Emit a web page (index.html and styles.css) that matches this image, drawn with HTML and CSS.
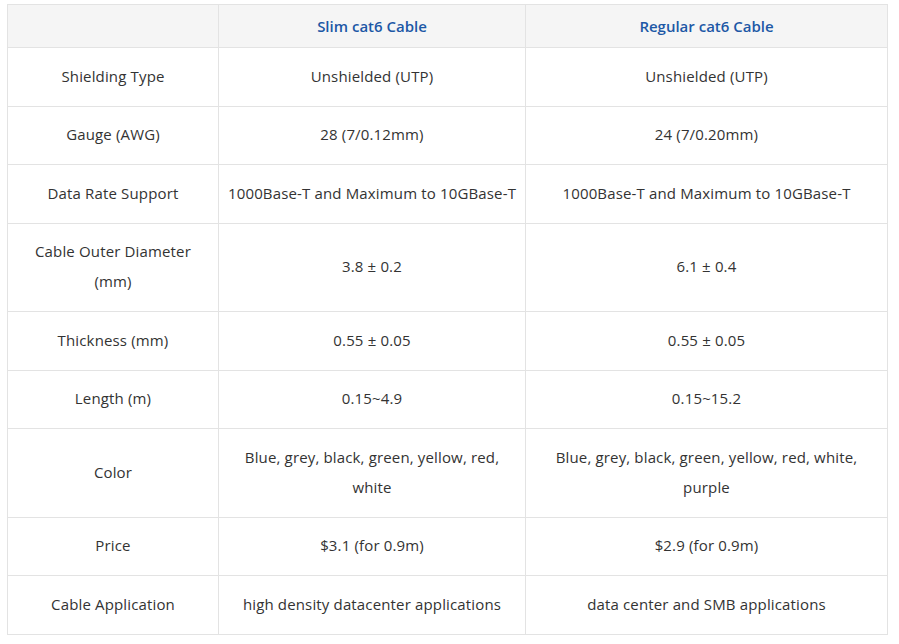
FILE: index.html
```
<!DOCTYPE html>
<html>
<head>
<meta charset="utf-8">
<link rel="stylesheet" href="styles.css">
</head>
<body>
<table class="spec">
<colgroup><col class="c1"><col class="c2"><col class="c3"></colgroup>
<thead>
<tr><th></th><th>Slim cat6 Cable</th><th>Regular cat6 Cable</th></tr>
</thead>
<tbody>
<tr><td>Shielding Type</td><td>Unshielded (UTP)</td><td>Unshielded (UTP)</td></tr>
<tr><td>Gauge (AWG)</td><td>28 (7/0.12mm)</td><td>24 (7/0.20mm)</td></tr>
<tr><td>Data Rate Support</td><td>1000Base-T and Maximum to 10GBase-T</td><td>1000Base-T and Maximum to 10GBase-T</td></tr>
<tr><td>Cable Outer Diameter (mm)</td><td>3.8 ± 0.2</td><td>6.1 ± 0.4</td></tr>
<tr><td>Thickness (mm)</td><td>0.55 ± 0.05</td><td>0.55 ± 0.05</td></tr>
<tr><td>Length (m)</td><td>0.15~4.9</td><td>0.15~15.2</td></tr>
<tr><td>Color</td><td>Blue, grey, black, green, yellow, red, white</td><td>Blue, grey, black, green, yellow, red, white, purple</td></tr>
<tr><td>Price</td><td>$3.1 (for 0.9m)</td><td>$2.9 (for 0.9m)</td></tr>
<tr><td>Cable Application</td><td>high density datacenter applications</td><td>data center and SMB applications</td></tr>
</tbody>
</table>
</body>
</html>
```
FILE: styles.css
```
html, body { background: #fff; }
body {
  margin: 0;
  padding: 4px 0 0 7px;
  font-family: "Open Sans", "Liberation Sans", sans-serif;
  font-size: 15px;
  color: #333;
}
.spec {
  border-collapse: collapse;
  table-layout: fixed;
  width: 880px;
}
.c1 { width: 211px; }
.c2 { width: 307px; }
.c3 { width: 362px; }
.spec th, .spec td {
  border: 1px solid #e3e3e3;
  text-align: center;
  vertical-align: middle;
}
.spec th {
  background: #f5f5f5;
  color: #1d58a6;
  font-weight: 600;
  height: 43px;
  padding: 0 8px;
  box-sizing: border-box;
  line-height: 20px;
}
.spec td {
  line-height: 30px;
  padding: 12.5px 10px 15px;
  letter-spacing: 0.15px;
}
.spec td:nth-child(2) {
  padding-left: 7px;
  padding-right: 7px;
}
```
